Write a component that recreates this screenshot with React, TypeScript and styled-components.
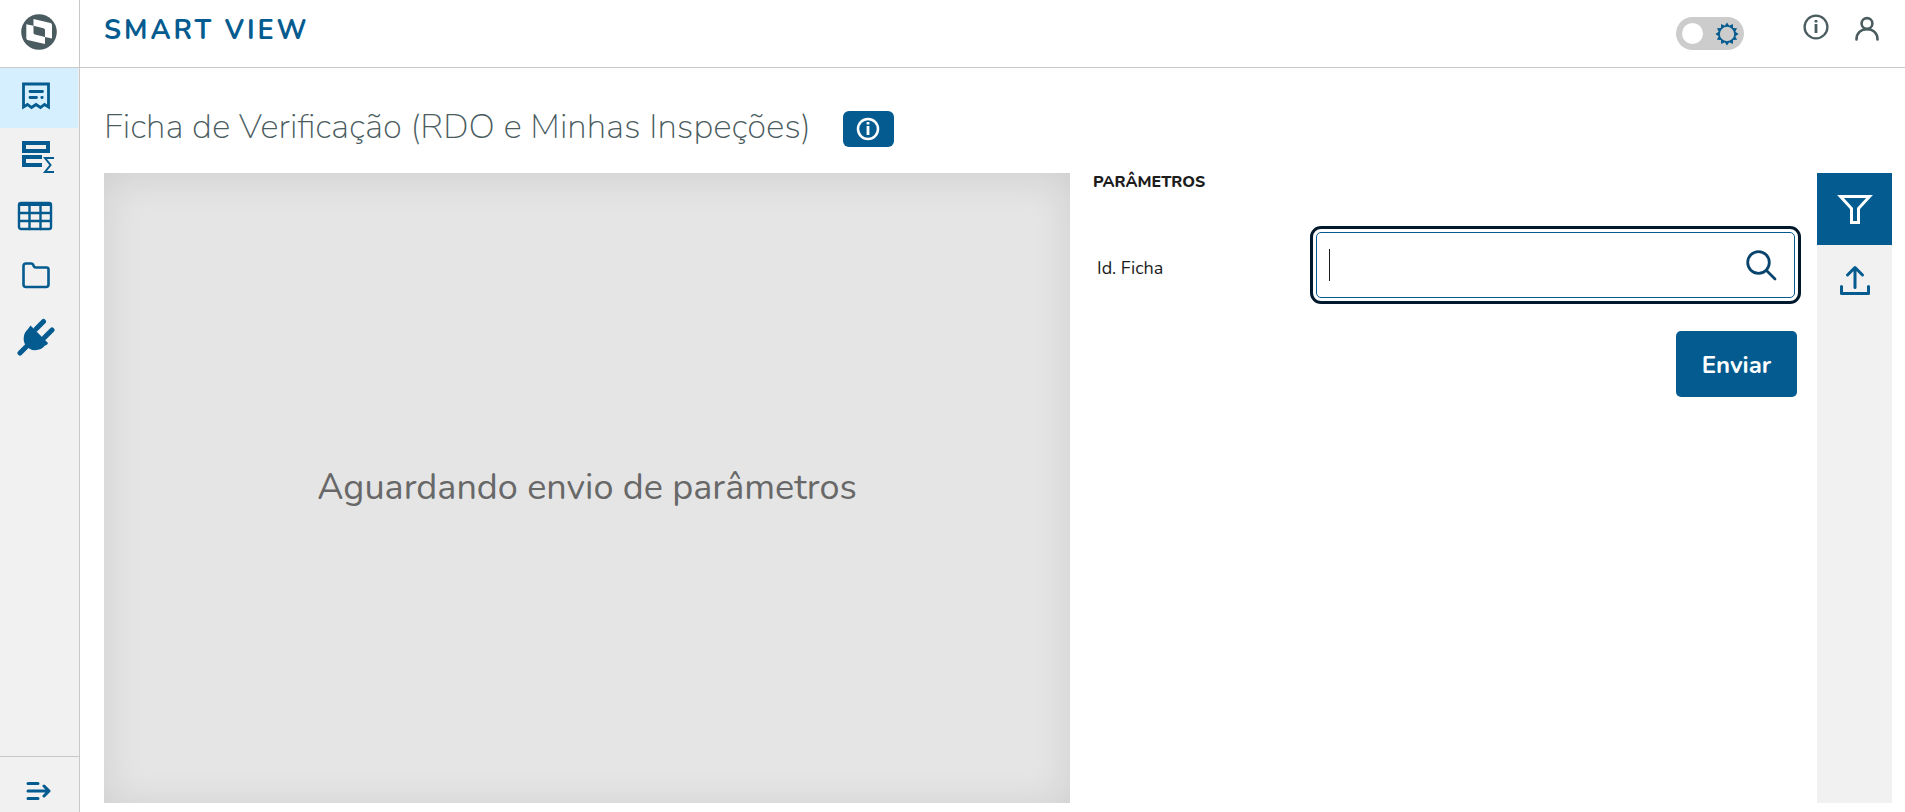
import React from "react";
import styled, { createGlobalStyle } from "styled-components";

const blue = "#045b8f";
const slate = "#4a5c60";
const line = "#c9c9c9";
const soft = "#f1f1f1";

const GlobalStyle = createGlobalStyle`
  * { box-sizing: border-box; }
  body {
    margin: 0;
    background: #fff;
    color: #1c1c1c;
    font-family: Nunito, "Nunito Sans", Lato, "Open Sans", sans-serif;
  }
  button { font: inherit; cursor: pointer; }
`;

const Shell = styled.div`
  display: grid;
  grid-template-columns: 80px 1fr;
  grid-template-rows: 68px 1fr;
  min-height: 100vh;
`;

const LogoCell = styled.a`
  display: flex;
  align-items: center;
  justify-content: center;
  border-right: 1px solid ${line};
  border-bottom: 1px solid ${line};
  padding: 0 2px 3px 0;
`;

const Header = styled.header`
  display: flex;
  align-items: flex-start;
  justify-content: space-between;
  border-bottom: 1px solid ${line};
  padding: 14px 20px 0 24px;
`;

const Brand = styled.span`
  color: ${blue};
  font-size: 27px;
  line-height: 34px;
  font-weight: 700;
  letter-spacing: 3px;
`;

const HeaderTools = styled.div`
  display: flex;
  align-items: flex-start;
`;

const ThemeSwitch = styled.label`
  display: flex;
  align-items: center;
  justify-content: space-between;
  width: 68px;
  height: 33px;
  margin: 3px 59px 0 0;
  padding: 0 5px 0 6px;
  border-radius: 17px;
  background: #ccc;
  cursor: pointer;
`;

const SwitchInput = styled.input`
  appearance: none;
  width: 21px;
  height: 21px;
  margin: 0;
  border-radius: 50%;
  background: #fff;
`;

const IconButton = styled.button`
  display: flex;
  padding: 0;
  border: 0;
  background: none;
  color: ${slate};
  & + & { margin-left: 20px; }
`;

const Sidebar = styled.nav`
  display: flex;
  flex-direction: column;
  justify-content: space-between;
  background: ${soft};
  border-right: 1px solid ${line};
`;

const SideItem = styled.a<{ $active?: boolean }>`
  display: flex;
  height: 60px;
  margin-right: 1px;
  padding: 8px 0 0 16px;
  color: ${blue};
  background: ${(p) => (p.$active ? "#d6effe" : "transparent")};
`;

const SideFooter = styled.button`
  display: flex;
  justify-content: center;
  width: 100%;
  height: 56px;
  padding: 24px 4px 0 0;
  border: 0;
  border-top: 1px solid ${line};
  background: none;
  color: ${blue};
`;

const Main = styled.main`
  display: flex;
  flex-direction: column;
  padding: 35px 13px 9px 24px;
`;

const TitleRow = styled.div`
  display: flex;
  align-items: center;
  gap: 32px;
  height: 48px;
  margin-bottom: 22px;
`;

const Title = styled.h1`
  margin: 0;
  color: ${slate};
  font-size: 35px;
  line-height: 48px;
  font-weight: 200;
`;

const InfoButton = styled.button`
  display: flex;
  align-items: center;
  justify-content: center;
  width: 51px;
  height: 36px;
  margin-top: 3px;
  padding: 0;
  border: 0;
  border-radius: 6px;
  background: ${blue};
  color: #fff;
`;

const Workspace = styled.div`
  display: grid;
  grid-template-columns: minmax(0, 966fr) minmax(0, 747fr) 75px;
  flex: 1;
`;

const Viewer = styled.section`
  display: flex;
  align-items: center;
  justify-content: center;
  background: #e5e5e5;
  box-shadow: inset 0 4px 40px rgba(0, 0, 0, 0.1);
  color: #686868;
  font-size: 36px;
  line-height: 48px;
`;

const Params = styled.form`
  padding: 0 20px 0 23px;
`;

const ParamsTitle = styled.h2`
  margin: 0 0 41px;
  font-size: 16px;
  line-height: 18px;
  font-weight: 800;
`;

const Field = styled.div`
  display: flex;
  align-items: center;
  justify-content: space-between;
`;

const Label = styled.label`
  padding: 6px 0 0 4px;
  font-size: 18px;
  line-height: 24px;
`;

const SearchBox = styled.div`
  display: flex;
  align-items: center;
  width: 68%;
  height: 66px;
  margin-right: 2px;
  padding: 0 15px 0 12px;
  border: 1px solid ${blue};
  border-radius: 5px;
  outline: 3px solid #00192d;
  outline-offset: 3px;
`;

const Caret = styled.span`
  width: 1px;
  height: 32px;
  background: #1c1c1c;
`;

const SearchInput = styled.input`
  flex: 1;
  min-width: 0;
  height: 40px;
  padding: 0;
  border: 0;
  outline: 0;
  background: none;
  font: inherit;
  font-size: 26px;
  caret-color: transparent;
`;

const SubmitRow = styled.div`
  display: flex;
  justify-content: flex-end;
  padding-top: 33px;
`;

const Submit = styled.button`
  width: 121px;
  height: 66px;
  padding: 2px 0 0;
  border: 0;
  border-radius: 5px;
  background: ${blue};
  color: #fff;
  font-size: 24px;
  font-weight: 700;
`;

const Rail = styled.aside`
  background: ${soft};
`;

const RailButton = styled.button<{ $active?: boolean }>`
  display: flex;
  align-items: center;
  justify-content: center;
  width: 100%;
  height: 72px;
  padding: 0;
  border: 0;
  background: ${(p) => (p.$active ? blue : "transparent")};
  color: ${(p) => (p.$active ? "#fff" : blue)};
`;

const Icon = ({ size = 40, w = 2, children }: { size?: number; w?: number; children: React.ReactNode }) => (
  <svg width={size} height={size} viewBox={`0 0 ${size} ${size}`} fill="none" stroke="currentColor"
    strokeWidth={w} strokeLinecap="round" strokeLinejoin="round" aria-hidden="true">
    {children}
  </svg>
);

const InfoIcon = ({ w = 2, r = 11.4 }: { w?: number; r?: number }) => (
  <Icon size={26} w={w}>
    <circle cx="13" cy="13" r={r} />
    <path d="M13 10V19M13 6v2.400" strokeLinecap="butt" strokeWidth="2.8" />
  </Icon>
);

const sunPoints = Array.from({ length: 24 }, (_, i) => {
  const r = i % 2 ? 8.6 : 11.6;
  const a = (i * Math.PI) / 12;
  return `${(12 + r * Math.sin(a)).toFixed(2)},${(12 - r * Math.cos(a)).toFixed(2)}`;
}).join(" ");

export default function App() {
  return (
    <Shell>
      <GlobalStyle />
      <LogoCell href="#" aria-label="Início">
        <svg width="36" height="36" viewBox="0 0 36 36" aria-hidden="true">
          <circle cx="18" cy="18" r="17.8" fill={slate} />
          <path d="M12.500 5 29.500 9Q31 9.400 31 11V24.500L24 23V30L6.500 26Q5.300 25.600 5.300 24V10.200L12.500 11.800Z" fill="#fff" />
          <path d="M12.500 11.800 22.500 14.200Q24 14.600 24 16V23L14 20.600Q12.500 20.200 12.500 18.800Z" fill={slate} />
        </svg>
      </LogoCell>
      <Header>
        <Brand>SMART VIEW</Brand>
        <HeaderTools>
          <ThemeSwitch>
            <SwitchInput type="checkbox" role="switch" aria-label="Tema" />
            <svg width="24" height="24" viewBox="0 0 24 24" aria-hidden="true">
              <polygon points={sunPoints} fill={blue} />
              <circle cx="12" cy="12" r="7.2" fill="#ccc" />
            </svg>
          </ThemeSwitch>
          <IconButton aria-label="Informações"><InfoIcon w={2.3} /></IconButton>
          <IconButton aria-label="Usuário">
            <Icon size={36} w={2.6}>
              <circle cx="18" cy="9.5" r="5.4" />
              <path d="M7.5 25.5C7.5 19 12 15.2 18 15.2S28.500 19 28.500 25.500" />
            </Icon>
          </IconButton>
        </HeaderTools>
      </Header>
      <Sidebar>
        <div>
          <SideItem href="#" $active aria-label="Relatórios">
            <Icon w={2.8}>
              <path d="M7.500 8H32.500V31L28.500 28.500 24.500 31.500 20 28.500 15.500 31.500 11.500 28.500 7.500 31Z" strokeLinejoin="miter" />
              <path d="M14 15.500H26.500M14 21.500H20.500M25.800 21.500H26.200" />
            </Icon>
          </SideItem>
          <SideItem href="#" aria-label="Totalizadores">
            <Icon w={4}>
              <path d="M8 7H32V15H8Z" strokeLinejoin="miter" />
              <path d="M26 21H8V29H26" strokeLinecap="butt" strokeLinejoin="miter" />
              <path d="M38 22H29L34.500 29 29 36H38" strokeWidth="2" strokeLinecap="butt" strokeLinejoin="miter" />
            </Icon>
          </SideItem>
          <SideItem href="#" aria-label="Tabelas">
            <Icon w={2.400}>
              <rect x="3" y="7" width="32" height="26" rx="2" />
              <path d="M4 8.500H34" strokeWidth="3" />
              <path d="M3 17H35M3 25H35M13.500 9V33M24.500 9V33" />
            </Icon>
          </SideItem>
          <SideItem href="#" aria-label="Pastas">
            <Icon w={2.6}>
              <path d="M7.500 10Q7.500 7.500 10 7.500H15Q17 7.500 17.500 9.500 18 11.500 20 11.500H30.500Q32.500 11.500 32.500 13.500V28.500Q32.500 31 30 31H10Q7.500 31 7.500 28.500Z" />
            </Icon>
          </SideItem>
          <SideItem href="#" aria-label="Conexões">
            <Icon w={5}>
              <path d="M4 37 11 30M20 13 27.500 5.500M28.500 21.500 36 14" />
              <path d="M14.500 9.500 32 27Q31.500 29 29 29.500A12.500 12.500 0 0 1 11.500 31.500A12.500 12.500 0 0 1 12 13Z" fill="currentColor" stroke="none" />
            </Icon>
          </SideItem>
        </div>
        <SideFooter aria-label="Expandir menu">
          <Icon size={26} w={3}>
            <path d="M3 2.500H13M3 10H24M3 17.500H13M19 5 24 10 19 15" />
          </Icon>
        </SideFooter>
      </Sidebar>
      <Main>
        <TitleRow>
          <Title>Ficha de Verificação (RDO e Minhas Inspeções)</Title>
          <InfoButton aria-label="Detalhes"><InfoIcon w={2.5} r={10} /></InfoButton>
        </TitleRow>
        <Workspace>
          <Viewer>Aguardando envio de parâmetros</Viewer>
          <Params onSubmit={(e) => e.preventDefault()}>
            <ParamsTitle>PARÂMETROS</ParamsTitle>
            <Field>
              <Label htmlFor="ficha">Id. Ficha</Label>
              <SearchBox>
                <Caret />
                <SearchInput id="ficha" autoFocus />
                <IconButton type="button" aria-label="Pesquisar">
                  <Icon size={36} w={2.800}>
                    <g stroke="#08446b">
                      <circle cx="15.500" cy="15.500" r="10.800" />
                      <path d="M23.500 23.500 32 32" />
                    </g>
                  </Icon>
                </IconButton>
              </SearchBox>
            </Field>
            <SubmitRow><Submit type="submit">Enviar</Submit></SubmitRow>
          </Params>
          <Rail>
            <RailButton $active aria-label="Filtros">
              <Icon w={3}>
                <path d="M5.500 7.500H34.500L23.500 19.500V33.500H16.500V19.500Z" strokeLinejoin="miter" />
              </Icon>
            </RailButton>
            <RailButton aria-label="Exportar">
              <Icon w={3}>
                <path d="M6.500 25.500V32.500H33.500V25.500M20 26.500V7M12.500 14 20 6.500 27.500 14" />
              </Icon>
            </RailButton>
          </Rail>
        </Workspace>
      </Main>
    </Shell>
  );
}
